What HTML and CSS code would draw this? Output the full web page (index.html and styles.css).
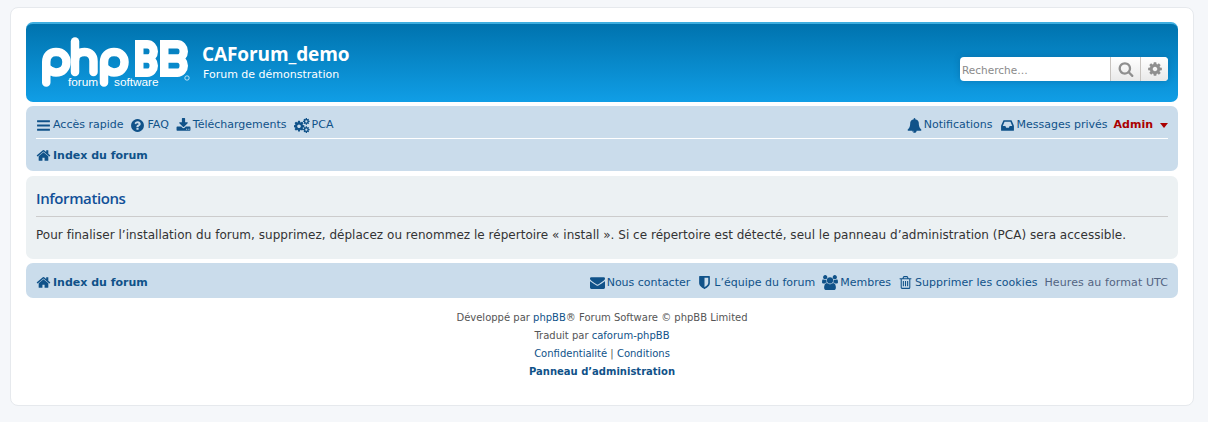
FILE: index.html
```html
<!DOCTYPE html>
<html lang="fr">
<head>
  <meta charset="UTF-8">
  <meta name="viewport" content="width=device-width, initial-scale=1.0">
  <title>CAForum_demo - Informations</title>
  <link rel="stylesheet" href="styles.css">
</head>
<body>
  <svg class="sprite" xmlns="http://www.w3.org/2000/svg">
    <symbol id="i-bars" viewBox="0 0 1792 1792"><path d="M1664 1344v128q0 26-19 45t-45 19h-1408q-26 0-45-19t-19-45v-128q0-26 19-45t45-19h1408q26 0 45 19t19 45zm0-512v128q0 26-19 45t-45 19h-1408q-26 0-45-19t-19-45v-128q0-26 19-45t45-19h1408q26 0 45 19t19 45zm0-512v128q0 26-19 45t-45 19h-1408q-26 0-45-19t-19-45v-128q0-26 19-45t45-19h1408q26 0 45 19t19 45z"/></symbol>
    <symbol id="i-question" viewBox="0 0 1792 1792"><path d="M1024 1376v-192q0-14-9-23t-23-9h-192q-14 0-23 9t-9 23v192q0 14 9 23t23 9h192q14 0 23-9t9-23zm256-672q0-88-55.5-163t-138.5-116-170-41q-243 0-371 213-15 24 8 42l132 100q7 6 19 6 16 0 25-12 53-68 86-92 34-24 86-24 48 0 85.5 26t37.5 59q0 38-20 61t-68 45q-63 28-115.5 86.5t-52.5 125.5v36q0 14 9 23t23 9h192q14 0 23-9t9-23q0-19 21.5-49.5t54.5-49.5q32-18 49-28.5t46-35 44.5-48 28-60.5 12.5-81zm384 192q0 209-103 385.5t-279.5 279.5-385.5 103-385.5-103-279.5-279.5-103-385.5 103-385.5 279.5-279.5 385.5-103 385.5 103 279.5 279.5 103 385.5z"/></symbol>
    <symbol id="i-download" viewBox="0 0 1792 1792"><path d="M1344 1344q0-26-19-45t-45-19-45 19-19 45 19 45 45 19 45-19 19-45zm256 0q0-26-19-45t-45-19-45 19-19 45 19 45 45 19 45-19 19-45zm128-224v320q0 40-28 68t-68 28h-1472q-40 0-68-28t-28-68v-320q0-40 28-68t68-28h465l135 136q58 56 136 56t136-56l136-136h464q40 0 68 28t28 68zm-325-569q17 41-14 70l-448 448q-18 19-45 19t-45-19l-448-448q-31-29-14-70 17-39 59-39h256v-448q0-26 19-45t45-19h256q26 0 45 19t19 45v448h256q42 0 59 39z"/></symbol>
    <symbol id="i-home" viewBox="0 0 1792 1792"><path d="M1472 992v480q0 26-19 45t-45 19h-384v-384h-256v384h-384q-26 0-45-19t-19-45v-480q0-1 .5-3t.5-3l575-474 575 474q1 2 1 6zm223-69l-62 74q-8 9-21 11h-3q-13 0-21-7l-692-577-692 577q-12 8-24 7-13-2-21-11l-62-74q-8-10-7-23.5t11-21.5l719-599q32-26 76-26t76 26l244 204v-195q0-14 9-23t23-9h192q14 0 23 9t9 23v408l219 182q10 8 11 21.5t-7 23.5z"/></symbol>
    <symbol id="i-bell" viewBox="0 0 1792 1792"><path d="M912 1696q0-16-16-16-59 0-101.5-42.5t-42.5-101.5q0-16-16-16t-16 16q0 73 51.5 124.5t124.5 51.5q16 0 16-16zm816-288q0 52-38 90t-90 38h-448q0 106-75 181t-181 75-181-75-75-181h-448q-52 0-90-38t-38-90q50-42 91-88t85-119.5 74.5-158.5 50-206 19.5-260q0-152 117-282.5t307-158.5q-8-19-8-39 0-40 28-68t68-28 68 28 28 68q0 20-8 39 190 28 307 158.5t117 282.5q0 139 19.5 260t50 206 74.5 158.5 85 119.5 91 88z"/></symbol>
    <symbol id="i-inbox" viewBox="-128 0 1792 1792"><path d="M1023 960h316q-1-3-2.5-8.5t-2.5-7.5l-212-496h-708l-212 496q-1 3-2.5 8.5t-2.5 7.5h316l95 192h320zm513 30v482q0 26-19 45t-45 19h-1408q-26 0-45-19t-19-45v-482q0-62 25-123l238-552q10-25 36.5-42t52.5-17h832q26 0 52.5 17t36.5 42l238 552q25 61 25 123z"/></symbol>
    <symbol id="i-search" viewBox="0 0 1792 1792"><path d="M1216 832q0-185-131.5-316.5t-316.5-131.5-316.5 131.5-131.5 316.5 131.5 316.5 316.5 131.5 316.5-131.5 131.5-316.5zm512 832q0 52-38 90t-90 38q-54 0-90-38l-343-342q-179 124-399 124-143 0-273.5-55.5t-225-150-150-225-55.5-273.5 55.5-273.5 150-225 225-150 273.5-55.5 273.5 55.5 225 150 150 225 55.5 273.5q0 220-124 399l343 343q37 37 37 90z"/></symbol>
    <symbol id="i-cog" viewBox="0 0 1792 1792"><path d="M1152 896q0-106-75-181t-181-75-181 75-75 181 75 181 181 75 181-75 75-181zm512-109v222q0 12-8 23t-20 13l-185 28q-19 54-39 91 35 50 107 138 10 12 10 25t-9 23q-27 37-99 108t-94 71q-12 0-26-9l-138-108q-44 23-91 38-16 136-29 186-7 28-36 28h-222q-14 0-24.5-8.5t-11.5-21.5l-28-184q-49-16-90-37l-141 107q-10 9-25 9-14 0-25-11-126-114-165-168-7-10-7-23 0-12 8-23 15-21 51-66.5t54-70.5q-27-50-41-99l-183-27q-13-2-21-12.5t-8-23.5v-222q0-12 8-23t19-13l186-28q14-46 39-92-40-57-107-138-10-12-10-24 0-10 9-23 26-36 98.5-107.5t94.5-71.5q13 0 26 10l138 107q44-23 91-38 16-136 29-186 7-28 36-28h222q14 0 24.5 8.5t11.5 21.5l28 184q49 16 90 37l142-107q9-9 24-9 13 0 25 10 129 119 165 170 7 8 7 22 0 12-8 23-15 21-51 66.5t-54 70.5q26 50 41 98l183 28q13 2 21 12.5t8 23.5z"/></symbol>
    <symbol id="i-cogs" viewBox="0 0 1920 1792">
      <use href="#i-cog" x="-150" y="230" width="1500" height="1500"/>
      <use href="#i-cog" x="1020" y="-60" width="920" height="920"/>
      <use href="#i-cog" x="1020" y="930" width="920" height="920"/>
    </symbol>
    <symbol id="i-envelope" viewBox="0 0 1792 1792"><path d="M1792 710v794q0 66-47 113t-113 47h-1472q-66 0-113-47t-47-113v-794q44 49 101 87 362 246 497 345 57 42 92.5 65.5t94.5 48 110 24.5h2q51 0 110-24.5t94.5-48 92.5-65.5q170-123 498-345 57-39 100-87zm0-294q0 79-49 151t-122 123q-376 261-468 325-10 7-42.5 30.5t-54 38-52 32.5-57.5 27-50 9h-2q-23 0-50-9t-57.5-27-52-32.5-54-38-42.5-30.5q-91-64-262-182.5t-205-142.5q-62-42-117-115.5t-55-136.5q0-78 41.5-130t118.5-52h1472q65 0 112.5 47t47.5 113z"/></symbol>
    <symbol id="i-shield" viewBox="0 0 1792 1792"><path d="M1344 960v-640h-448v1137q119-63 213-137 235-184 235-360zm192-768v768q0 86-33.5 170.5t-83 150-118 127.5-126.5 103-121 77.5-89.5 49.5-42.5 20q-12 6-26 6t-26-6q-16-7-42.5-20t-89.5-49.5-121-77.5-126.5-103-118-127.5-83-150-33.5-170.5v-768q0-26 19-45t45-19h1152q26 0 45 19t19 45z"/></symbol>
    <symbol id="i-group" viewBox="-64 0 1920 1792"><path d="M529 896q-162 5-265 128h-134q-82 0-138-40.5t-56-118.5q0-353 124-353 6 0 43.5 21t97.5 42.5 119 21.5q67 0 133-23-5 37-5 66 0 139 81 256zm1071 637q0 120-73 189.5t-194 69.5h-874q-121 0-194-69.5t-73-189.5q0-53 3.5-103.5t14-109 26.5-108.5 43-97.5 62-81 85.5-53.5 111.5-20q10 0 43 21.5t73 48 107 48 135 21.5 135-21.5 107-48 73-48 43-21.5q61 0 111.5 20t85.5 53.5 62 81 43 97.5 26.5 108.5 14 109 3.5 103.5zm-1024-1277q0 106-75 181t-181 75-181-75-75-181 75-181 181-75 181 75 75 181zm704 384q0 159-112.5 271.5t-271.5 112.5-271.5-112.5-112.5-271.5 112.5-271.5 271.5-112.5 271.5 112.5 112.5 271.5zm576 225q0 78-56 118.5t-138 40.5h-134q-103-123-265-128 81-117 81-256 0-29-5-66 66 23 133 23 59 0 119-21.5t97.5-42.5 43.5-21q124 0 124 353zm-128-609q0 106-75 181t-181 75-181-75-75-181 75-181 181-75 181 75 75 181z"/></symbol>
    <symbol id="i-trash" viewBox="0 0 1792 1792"><path d="M704 736v576q0 14-9 23t-23 9h-64q-14 0-23-9t-9-23v-576q0-14 9-23t23-9h64q14 0 23 9t9 23zm256 0v576q0 14-9 23t-23 9h-64q-14 0-23-9t-9-23v-576q0-14 9-23t23-9h64q14 0 23 9t9 23zm256 0v576q0 14-9 23t-23 9h-64q-14 0-23-9t-9-23v-576q0-14 9-23t23-9h64q14 0 23 9t9 23zm128 724v-948h-896v948q0 22 7 40.5t14.5 27 10.5 8.5h832q3 0 10.5-8.5t14.5-27 7-40.5zm-672-1076h448l-48-117q-7-9-17-11h-317q-10 2-17 11zm928 32v64q0 14-9 23t-23 9h-96v948q0 83-47 143.5t-113 60.5h-832q-66 0-113-58.5t-47-141.5v-952h-96q-14 0-23-9t-9-23v-64q0-14 9-23t23-9h309l70-167q15-37 54-63t79-26h320q40 0 79 26t54 63l70 167h309q14 0 23 9t9 23z"/></symbol>
  </svg>

  <div class="wrap">
    <div class="headerbar">
      <a class="logo" href="#">
        <svg width="152" height="54" viewBox="40 35 152 54" xmlns="http://www.w3.org/2000/svg">
          <g fill="none" stroke="#fff" stroke-width="8.5" stroke-linecap="round" stroke-linejoin="round">
            <path d="M46.25 82.5 V62 C46.25 56 50 52 56 52 C63 52 66.5 57 66.5 62 C66.5 68 62.5 72.5 56 72.5 C52.5 72.5 50 71 47 68"/>
            <path d="M75 41.5 V72"/>
            <path d="M75 60 C75 55 79 52 84.5 52 C90.5 52 93.5 56 93.5 61 V72"/>
            <path d="M104 82.5 V62 C104 56 108 52 114 52 C121 52 124.5 57 124.5 62 C124.5 68 120.5 72.5 114 72.5 C110.5 72.5 108 71 105 68"/>
          </g>
          <g fill="none" stroke="#fff" stroke-width="8.5">
            <path d="M139.25 44.25 H147.25 a6.5 7.125 0 0 1 0 14.25 H139.25 M147.25 58.5 a6.5 7.125 0 0 1 0 14.25 H139.25 V40"/>
            <path d="M164.25 44.25 H177.25 a6.5 7.125 0 0 1 0 14.25 H164.25 M177.25 58.5 a6.5 7.125 0 0 1 0 14.25 H164.25 V40"/>
          </g>
          <text class="logo-small" x="68" y="86">forum</text>
          <text class="logo-small" x="114" y="86">software</text>
          <circle cx="187" cy="78" r="2.2" fill="none" stroke="#fff" stroke-width=".7"/>
        </svg>
      </a>
      <div class="site-desc">
        <h1>CAForum_demo</h1>
        <p>Forum de démonstration</p>
      </div>
      <div class="search-box">
        <input class="search-input" type="text" placeholder="Recherche…">
        <button class="search-btn" type="button"><svg class="icon icon-grey"><use href="#i-search"/></svg></button>
        <button class="search-btn" type="button"><svg class="icon icon-grey"><use href="#i-cog"/></svg></button>
      </div>
    </div>

    <div class="navbar">
      <div class="nav-row nav-main">
        <a href="#"><svg class="icon"><use href="#i-bars"/></svg>Accès rapide</a>
        <a href="#"><svg class="icon"><use href="#i-question"/></svg>FAQ</a>
        <a href="#"><svg class="icon"><use href="#i-download"/></svg>Téléchargements</a>
        <a href="#"><svg class="icon icon-wide"><use href="#i-cogs"/></svg>PCA</a>
        <span class="spacer"></span>
        <a href="#"><svg class="icon"><use href="#i-bell"/></svg>Notifications</a>
        <a href="#"><svg class="icon"><use href="#i-inbox"/></svg>Messages privés</a>
        <a class="user" href="#">Admin<span class="caret"></span></a>
      </div>
      <div class="nav-row nav-crumbs">
        <a class="crumb" href="#"><svg class="icon"><use href="#i-home"/></svg>Index du forum</a>
      </div>
    </div>

    <div class="panel">
      <h2>Informations</h2>
      <p>Pour finaliser l’installation du forum, supprimez, déplacez ou renommez le répertoire « install ». Si ce répertoire est détecté, seul le panneau d’administration (PCA) sera accessible.</p>
    </div>

    <div class="navbar navbar-foot">
      <div class="nav-row">
        <a class="crumb" href="#"><svg class="icon"><use href="#i-home"/></svg>Index du forum</a>
        <span class="spacer"></span>
        <a href="#"><svg class="icon"><use href="#i-envelope"/></svg>Nous contacter</a>
        <a href="#"><svg class="icon"><use href="#i-shield"/></svg>L’équipe du forum</a>
        <a href="#"><svg class="icon icon-wide"><use href="#i-group"/></svg>Membres</a>
        <a class="cookies" href="#"><svg class="icon"><use href="#i-trash"/></svg>Supprimer les cookies</a>
        <span class="timezone">Heures au format UTC</span>
      </div>
    </div>

    <div class="copyright">
      <p>Développé par <a href="#">phpBB</a>® Forum Software © phpBB Limited</p>
      <p>Traduit par <a href="#">caforum-phpBB</a></p>
      <p><a href="#">Confidentialité</a> | <a href="#">Conditions</a></p>
      <p><a class="admin-link" href="#">Panneau d’administration</a></p>
    </div>
  </div>
</body>
</html>
```

FILE: styles.css
```css
* {
  box-sizing: border-box;
}

html, body {
  margin: 0;
  padding: 0;
}

body {
  background: #f5f7fa;
  color: #536482;
  font-family: "DejaVu Sans", Verdana, sans-serif;
  font-size: 11px;
  padding: 7px 14px 16px 10px;
}

a {
  color: #105289;
  text-decoration: none;
}

.sprite {
  display: none;
}

.icon {
  width: 15px;
  height: 15px;
  fill: currentColor;
  flex: none;
}

.icon-wide {
  width: 16px;
}

.icon-grey {
  width: 16px;
  height: 16px;
  color: #8f8f8f;
}

.wrap {
  background: #fff;
  border: 1px solid #e6e9ed;
  border-radius: 8px;
  padding: 14px 15px 0;
  height: 399px;
}

/* header */
.headerbar {
  display: flex;
  align-items: flex-start;
  height: 80px;
  padding: 11px 10px 0 14px;
  border-top: 2px solid #3eaee0;
  border-radius: 7px;
  background: linear-gradient(to bottom, #0073ae, #109ee6);
  color: #fff;
}

.logo {
  display: block;
  height: 54px;
}

.logo-small {
  fill: #fff;
  font-family: "Liberation Sans", Arial, sans-serif;
  font-size: 11.8px;
}

.site-desc {
  margin-left: 11px;
  padding-top: 7px;
}

.site-desc h1 {
  margin: 0 0 0 -1px;
  font-family: "Open Sans", sans-serif;
  font-size: 19px;
  font-weight: 700;
  letter-spacing: -.1px;
  line-height: 24px;
}

.site-desc p {
  margin: 2px 0 0;
  font-size: 11px;
  line-height: 14px;
}

.search-box {
  display: flex;
  margin: 22px 0 0 auto;
  width: 208px;
  height: 24px;
  border-radius: 4px;
  overflow: hidden;
  background: #fff;
  box-shadow: 0 0 6px rgba(0, 50, 90, .25);
}

.search-input {
  flex: 1;
  min-width: 0;
  border: 0;
  padding: 1px 3px 0 2px;
  font: 10.5px "DejaVu Sans", sans-serif;
  color: #333;
  background: transparent;
  outline: none;
}

.search-input::placeholder {
  color: #8a8a8a;
  opacity: 1;
}

.search-btn {
  display: flex;
  align-items: center;
  justify-content: center;
  width: 30px;
  padding: 0;
  border: 0;
  border-left: 1px solid #c7c3bf;
  background: linear-gradient(to bottom, #fff, #e9e9e9);
}

.search-btn + .search-btn {
  width: 28px;
}

/* nav bars */
.navbar {
  margin-top: 4px;
  padding: 0 10px;
  background: #cadceb;
  border-radius: 7px;
}

.nav-row {
  display: flex;
  align-items: center;
  gap: 7px;
}

.nav-row a {
  display: flex;
  align-items: center;
  gap: 2px;
  line-height: 14px;
}

.spacer {
  flex: 1;
}

.nav-main {
  height: 33px;
  padding-top: 6px;
  border-bottom: 1px solid #fff;
}

.nav-crumbs {
  height: 32px;
  padding-top: 1px;
}

.crumb {
  font-weight: 700;
}

.user {
  margin-left: -1px;
  font-weight: 700;
  color: #aa0000 !important;
}

.caret {
  margin-left: 5px;
  border-left: 4.5px solid transparent;
  border-right: 4.5px solid transparent;
  border-top: 5px solid #aa0000;
}

.navbar-foot {
  margin-top: 4px;
}

.navbar-foot .nav-row {
  height: 35px;
  padding-top: 4px;
}

.cookies {
  letter-spacing: .05px;
}

.timezone {
  color: #536482;
  letter-spacing: .1px;
  line-height: 14px;
}

/* message panel */
.panel {
  margin-top: 5px;
  padding: 5px 10px;
  height: 83px;
  border-radius: 7px;
  background: #ecf1f3;
  color: #333;
}

.panel h2 {
  margin: 0;
  padding: 5px 0 6px;
  border-bottom: 1px solid #ccc;
  color: #115098;
  font-family: "Open Sans", sans-serif;
  font-size: 15px;
  font-weight: 600;
  letter-spacing: -.4px;
  line-height: 24px;
}

.panel p {
  margin: 9px 0 0;
  font-size: 12px;
  letter-spacing: .025px;
  line-height: 18px;
}

/* footer */
.copyright {
  margin-top: 11px;
  text-align: center;
  font-size: 10px;
  line-height: 18px;
  color: #555;
}

.copyright p {
  margin: 0;
}

.admin-link {
  font-weight: 700;
}
```
